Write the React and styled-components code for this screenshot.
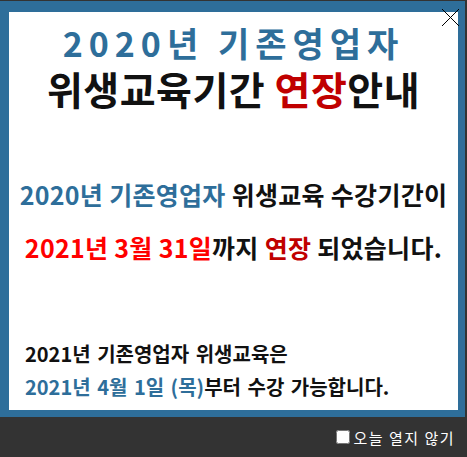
import React from "react";
import styled, { createGlobalStyle } from "styled-components";

const Global = createGlobalStyle`
  html, body {
    margin: 0;
    padding: 0;
    background: #333333;
  }
  body {
    font-family: "Noto Sans CJK KR", "Noto Sans", sans-serif;
  }
`;

const Popup = styled.div`
  width: 467px;
  height: 457px;
  display: flex;
  flex-direction: column;
  background: #333333;
  padding-top: 1px;
  box-sizing: border-box;
`;

const Frame = styled.div`
  width: 465px;
  box-sizing: border-box;
  border-style: solid;
  border-color: #2e6e9a;
  border-width: 11px 7px 7px 9px;
`;

const Content = styled.div`
  position: relative;
  height: 398px;
  background: #ffffff;
  display: flex;
  flex-direction: column;
`;

const Close = styled.button`
  position: absolute;
  top: -4px;
  right: -2px;
  width: 19px;
  height: 19px;
  padding: 0;
  border: none;
  background: transparent;
  cursor: pointer;
  svg {
    display: block;
  }
`;

const Title = styled.h1`
  margin: 9px 0 0;
  text-align: center;
  font-weight: 700;
  color: #111;
`;

const TitleLine = styled.div`
  font-size: ${(p) => p.$size};
  line-height: ${(p) => p.$lh};
  letter-spacing: ${(p) => p.$spacing || "0px"};
  color: ${(p) => p.$color || "#111"};
`;

const Notice = styled.div`
  margin-top: 57px;
  text-align: center;
  font-size: 25px;
  font-weight: 700;
  line-height: 53px;
  color: #111;
  letter-spacing: 0.3px;
`;

const Detail = styled.div`
  margin-top: 63px;
  padding-left: 16px;
  font-size: 20px;
  font-weight: 600;
  line-height: 33px;
  color: #111;
  word-spacing: 2px;
`;

const C = styled.span`
  color: ${(p) => p.$c};
`;

const Footer = styled.div`
  flex: 1;
  display: flex;
  justify-content: flex-end;
  align-items: center;
  padding-right: 12px;
  color: #ffffff;
  font-size: 15px;
  letter-spacing: 1.5px;
  label {
    display: flex;
    align-items: center;
    cursor: pointer;
  }
  input {
    margin: 0 3px 0 0;
    width: 14px;
    height: 14px;
  }
`;

const BLUE = "#2e6e9a";
const RED = "#ff0000";
const DARKRED = "#c00000";

export default function App() {
  return (
    <>
      <Global />
      <Popup>
        <Frame>
          <Content>
            <Close aria-label="닫기">
              <svg width="19" height="19" viewBox="0 0 19 19">
                <path d="M1 1 L18 18 M18 1 L1 18" stroke="#000" strokeWidth="1" fill="none" />
              </svg>
            </Close>
            <Title>
              <TitleLine $size="34px" $lh="44px" $color={BLUE} $spacing="6px">
                2020년 기존영업자
              </TitleLine>
              <TitleLine $size="39px" $lh="46px" $spacing="0.5px">
                위생교육기간 <C $c={DARKRED}>연장</C>안내
              </TitleLine>
            </Title>
            <Notice>
              <div>
                <C $c={BLUE}>2020년 기존영업자</C> 위생교육 수강기간이
              </div>
              <div>
                <C $c={RED}>2021년 3월 31일</C>까지 <C $c={DARKRED}>연장</C> 되었습니다.
              </div>
            </Notice>
            <Detail>
              <div>2021년 기존영업자 위생교육은</div>
              <div>
                <C $c={BLUE}>2021년 4월 1일 (목)</C>부터 수강 가능합니다.
              </div>
            </Detail>
          </Content>
        </Frame>
        <Footer>
          <label>
            <input type="checkbox" />
            오늘 열지 않기
          </label>
        </Footer>
      </Popup>
    </>
  );
}
